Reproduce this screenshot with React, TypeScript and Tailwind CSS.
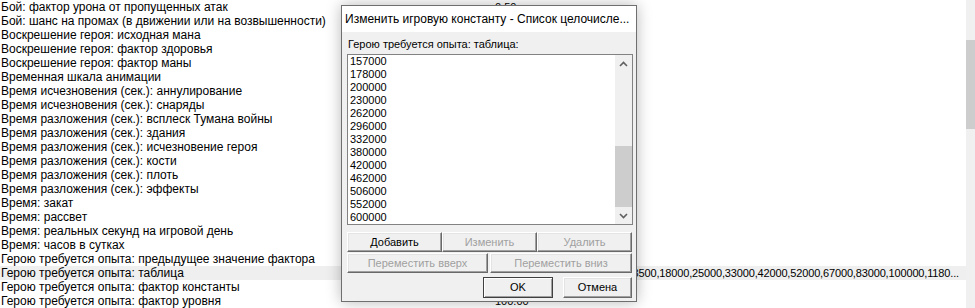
import React from "react";

const rows: { name: string; value: string }[] = [
  { name: "Бой: фактор урона от пропущенных атак", value: "0.50" },
  { name: "Бой: шанс на промах (в движении или на возвышенности)", value: "25.00" },
  { name: "Воскрешение героя: исходная мана", value: "1.00" },
  { name: "Воскрешение героя: фактор здоровья", value: "1.00" },
  { name: "Воскрешение героя: фактор маны", value: "1.00" },
  { name: "Временная шкала анимации", value: "1.00" },
  { name: "Время исчезновения (сек.): аннулирование", value: "2.00" },
  { name: "Время исчезновения (сек.): снаряды", value: "2.00" },
  { name: "Время разложения (сек.): всплеск Тумана войны", value: "2.00" },
  { name: "Время разложения (сек.): здания", value: "120.00" },
  { name: "Время разложения (сек.): исчезновение героя", value: "2.00" },
  { name: "Время разложения (сек.): кости", value: "88.00" },
  { name: "Время разложения (сек.): плоть", value: "2.00" },
  { name: "Время разложения (сек.): эффекты", value: "8.00" },
  { name: "Время: закат", value: "18.00" },
  { name: "Время: рассвет", value: "6.00" },
  { name: "Время: реальных секунд на игровой день", value: "480.00" },
  { name: "Время: часов в сутках", value: "24.00" },
  { name: "Герою требуется опыта: предыдущее значение фактора", value: "1.00" },
  {
    name: "Герою требуется опыта: таблица",
    value:
      "200,1000,2500,4500,7000,9500,13500,18000,25000,33000,42000,52000,67000,83000,100000,1180...",
  },
  { name: "Герою требуется опыта: фактор константы", value: "0.00" },
  { name: "Герою требуется опыта: фактор уровня", value: "100.00" },
];

const items = [
  "157000",
  "178000",
  "200000",
  "230000",
  "262000",
  "296000",
  "332000",
  "380000",
  "420000",
  "462000",
  "506000",
  "552000",
  "600000",
];

const font = { fontFamily: '"Liberation Sans", Arial, sans-serif' };

function Btn({
  label,
  disabled,
  def,
  className,
}: {
  label: string;
  disabled?: boolean;
  def?: boolean;
  className: string;
}) {
  return (
    <div
      className={
        "flex items-center justify-center bg-[#f0f0f0] text-[11px] leading-none box-border " +
        (def
          ? "border border-[#404040] shadow-[inset_1px_1px_0_#ffffff,inset_-1px_-1px_0_#a0a0a0] "
          : "border-t border-l border-t-white border-l-white border-b border-r border-b-[#696969] border-r-[#696969] shadow-[inset_-1px_-1px_0_#a0a0a0,inset_1px_1px_0_#e3e3e3] ") +
        (disabled ? "text-[#a0a0a0] " : "text-black ") +
        className
      }
    >
      {label}
    </div>
  );
}

function Chevron({ up }: { up?: boolean }) {
  return (
    <svg width="9" height="6" viewBox="0 0 9 6">
      <path
        d={up ? "M1 5 L4.5 1.5 L8 5" : "M1 1 L4.5 4.5 L8 1"}
        fill="none"
        stroke="#606060"
        strokeWidth="1.6"
      />
    </svg>
  );
}

export default function App() {
  return (
    <div
      className="relative w-[975px] h-[308px] overflow-hidden bg-white text-black"
      style={font}
    >
      <div className="flex h-full">
        <div className="flex-1 flex flex-col">
          {rows.map((r, i) => (
            <div
              key={i}
              className={
                "flex h-[14px] shrink-0 items-center text-[12px] leading-[14px] whitespace-nowrap " +
                (i === 19 ? "bg-[#efefef]" : "")
              }
            >
              <div className="w-[495px] pl-[1px] overflow-hidden">{r.name}</div>
              {i === 19 ? (
                <div className="w-[464px] flex justify-end overflow-hidden text-[11px] tracking-[-0.15px]">
                  <span className="shrink-0">{r.value}</span>
                </div>
              ) : (
                <div className="text-[11px]">{r.value}</div>
              )}
            </div>
          ))}
        </div>
        <div className="w-[9px] h-full bg-[#f0f0f0] flex flex-col">
          <div className="mt-[40px] h-[89px] bg-[#cdcdcd]" />
        </div>
      </div>

      {/* Dialog */}
      <div className="absolute left-[341px] top-[5px] w-[296px] h-[297px] border border-[#6f6f6f] bg-[#f0f0f0] shadow-[0_0_14px_rgba(0,0,0,0.28)] flex flex-col box-border">
        <div className="h-[26px] bg-white flex items-center pl-[3px] text-[12px] text-black whitespace-nowrap overflow-hidden">
          Изменить игровую константу - Список целочисле...
        </div>
        <div className="flex flex-col pl-[5px] pr-[3px]">
          <div className="h-[22px] pt-[5px] text-[11px] leading-[14px] pl-[1px]">
            Герою требуется опыта: таблица:
          </div>
          <div className="h-[171px] border border-[#828282] bg-white flex box-border">
            <div className="flex-1 flex flex-col pl-[2px] pt-[0px]">
              {items.map((n) => (
                <div key={n} className="h-[13px] leading-[13px] text-[11px]">
                  {n}
                </div>
              ))}
            </div>
            <div className="w-[17px] bg-[#f0f0f0] flex flex-col">
              <div className="h-[17px] flex items-center justify-center">
                <Chevron up />
              </div>
              <div className="h-[74px]" />
              <div className="h-[61px] bg-[#cdcdcd]" />
              <div className="flex-1 flex items-center justify-center">
                <Chevron />
              </div>
            </div>
          </div>
          <div className="mt-[7px] flex">
            <Btn label="Добавить" className="w-[95px] h-[20px]" />
            <Btn label="Изменить" disabled className="w-[95px] h-[20px]" />
            <Btn label="Удалить" disabled className="w-[95px] h-[20px]" />
          </div>
          <div className="mt-[1px] flex gap-[2px]">
            <Btn label="Переместить вверх" disabled className="w-[141px] h-[20px]" />
            <Btn label="Переместить вниз" disabled className="w-[142px] h-[20px]" />
          </div>
          <div className="mt-[4px] flex justify-end gap-[10px] pr-[1px]">
            <Btn label="OK" def className="w-[70px] h-[21px]" />
            <Btn label="Отмена" className="w-[69px] h-[21px]" />
          </div>
        </div>
      </div>
    </div>
  );
}
